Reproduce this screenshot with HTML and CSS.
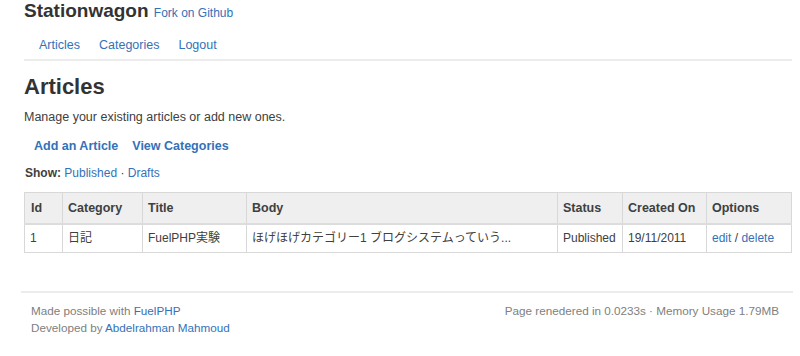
FILE: index.html
```html
<!DOCTYPE html>
<html>
<head>
  <meta charset="UTF-8">
  <title>Stationwagon - Articles</title>
  <link rel="stylesheet" href="styles.css">
</head>
<body>

  <div class="container">
    <div class="header">
      <h1 class="brand">Stationwagon <a href="#" class="fork">Fork on Github</a></h1>
      <ul class="nav">
        <li><a href="#">Articles</a></li>
        <li><a href="#">Categories</a></li>
        <li><a href="#">Logout</a></li>
      </ul>
    </div>

    <div class="content">
      <h2>Articles</h2>
      <p class="lead">Manage your existing articles or add new ones.</p>

      <ul class="actions">
        <li><a href="#">Add an Article</a></li>
        <li><a href="#">View Categories</a></li>
      </ul>

      <p class="filter"><strong>Show:</strong> <a href="#">Published</a> &middot; <a href="#">Drafts</a></p>

      <table class="articles">
        <thead>
          <tr>
            <th class="col-id">Id</th>
            <th class="col-category">Category</th>
            <th class="col-title">Title</th>
            <th>Body</th>
            <th class="col-status">Status</th>
            <th class="col-created">Created On</th>
            <th class="col-options">Options</th>
          </tr>
        </thead>
        <tbody>
          <tr>
            <td>1</td>
            <td>日記</td>
            <td>FuelPHP実験</td>
            <td>ほげほげカテゴリー1 ブログシステムっていう...</td>
            <td>Published</td>
            <td>19/11/2011</td>
            <td><a href="#">edit</a> / <a href="#">delete</a></td>
          </tr>
        </tbody>
      </table>
    </div>

    <div class="footer">
      <div class="credits">
        <p>Made possible with <a href="#">FuelPHP</a></p>
        <p>Developed by <a href="#">Abdelrahman Mahmoud</a></p>
      </div>
      <p class="stats">Page renedered in 0.0233s &middot; Memory Usage 1.79MB</p>
    </div>
  </div>

</body>
</html>
```

FILE: styles.css
```css
:root {
  --text-color: #404040;
  --title-color: #333333;
  --link-color: #3471b8;
  --muted-color: #808080;
  --rule-color: #ececec;
  --border-color: #d8d8d8;
  --head-bg: #efefef;
}
body {
  margin: 0;
  font-family: "Liberation Sans", Arial, "Noto Sans CJK JP", sans-serif;
  font-size: 12.5px;
  line-height: 18px;
  color: var(--text-color);
  background-color: #fff;
}
a {
  color: var(--link-color);
  text-decoration: none;
}
p {
  margin: 0;
}
.container {
  padding: 0 8px 0 24px;
}
.header {
  padding-bottom: 5px;
  border-bottom: 2px solid var(--rule-color);
}
.brand {
  margin: 0;
  font-size: 19px;
  line-height: 22px;
  font-weight: bold;
  color: var(--title-color);
}
.brand .fork {
  font-size: 12px;
  font-weight: normal;
}
.nav {
  display: flex;
  gap: 19px;
  list-style: none;
  margin: 12px 0 0;
  padding: 0 0 0 15px;
}
.content h2 {
  margin: 13px 0 0;
  font-size: 22px;
  line-height: 26px;
  font-weight: bold;
  color: var(--title-color);
}
.lead {
  margin-top: 8px;
}
.actions {
  display: flex;
  gap: 14px;
  list-style: none;
  margin: 11px 0 0;
  padding: 0 0 0 10px;
  font-weight: bold;
}
.filter {
  margin-top: 9px;
  font-size: 12px;
  padding-left: 1px;
}
.articles {
  width: 100%;
  margin-top: 10px;
  border-collapse: collapse;
  table-layout: fixed;
  border: 1px solid var(--border-color);
}
.articles th,
.articles td {
  box-sizing: border-box;
  padding: 0 5px;
  text-align: left;
  border-left: 1px solid var(--border-color);
  white-space: nowrap;
  overflow: hidden;
}
.articles th {
  height: 31px;
  font-size: 12.5px;
  font-weight: bold;
  background-color: var(--head-bg);
  border-bottom: 2px solid #dcdcdc;
}
.articles td {
  height: 29px;
  font-size: 12px;
}
.articles .col-id { width: 38px; padding-left: 6px; }
.articles .col-category { width: 80px; }
.articles .col-title { width: 104px; }
.articles .col-status { width: 65px; }
.articles .col-created { width: 84px; }
.articles .col-options { width: 85px; }
.footer {
  display: flex;
  justify-content: space-between;
  margin: 38px -1px 0 -3px;
  padding: 9px 14px 0 10px;
  border-top: 2px solid var(--rule-color);
  font-size: 11.7px;
  line-height: 17px;
  color: var(--muted-color);
}
```
